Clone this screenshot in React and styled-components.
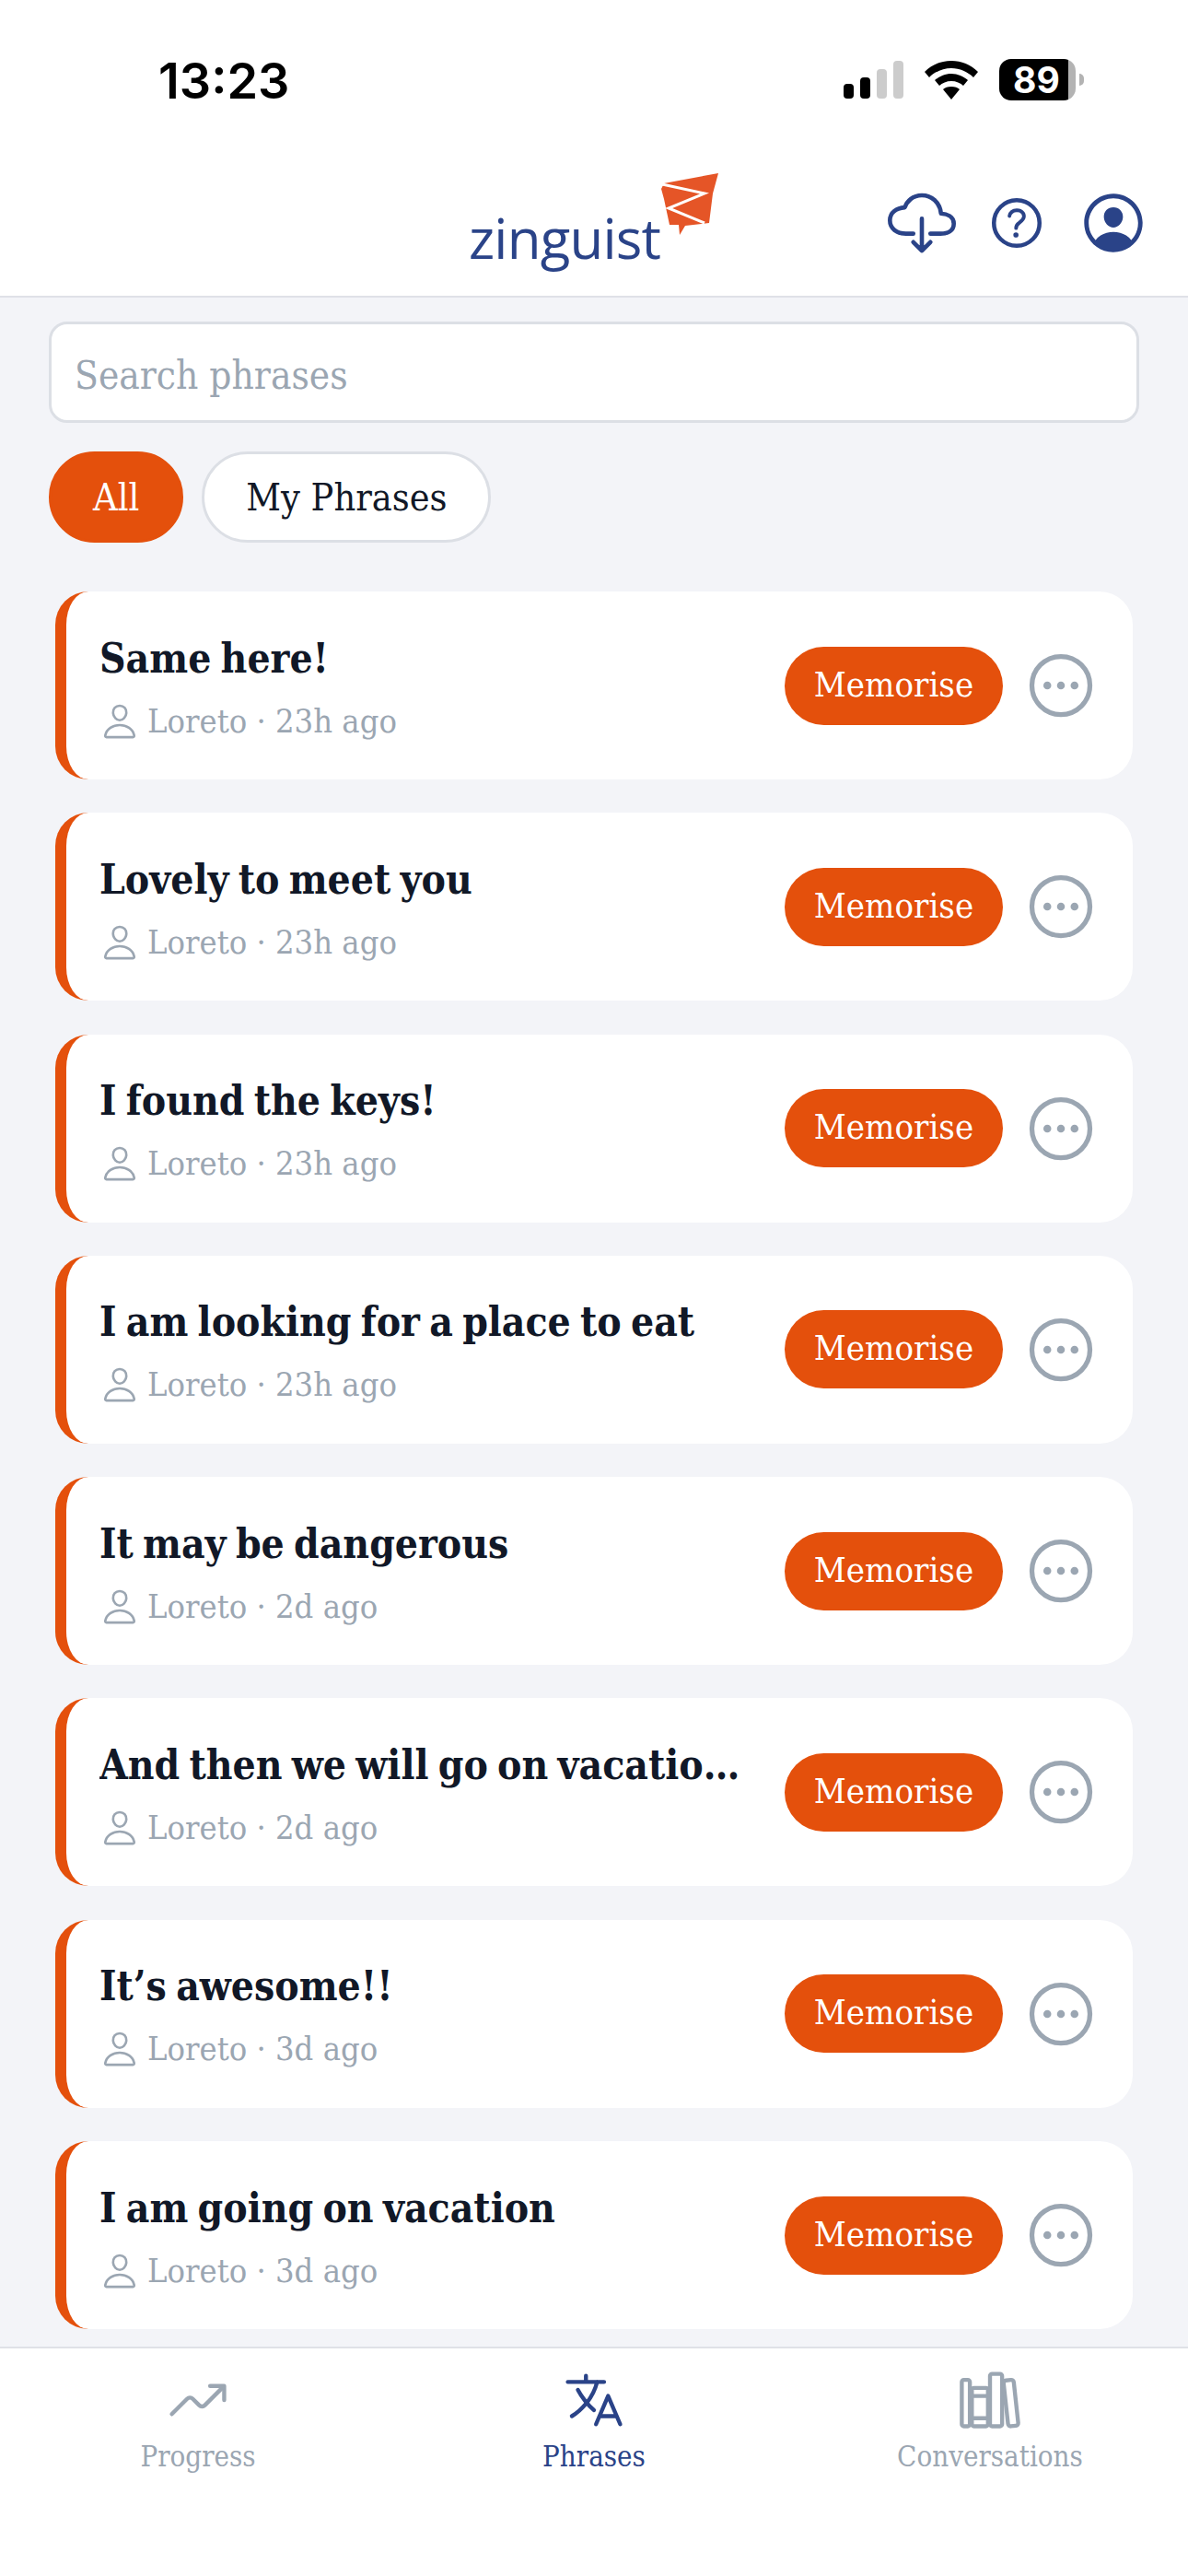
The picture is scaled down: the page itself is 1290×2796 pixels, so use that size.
import React from 'react';
import styled, { createGlobalStyle } from 'styled-components';
import {
  IoCloudDownloadOutline,
  IoHelpCircleOutline,
  IoPersonCircleOutline,
  IoPersonOutline,
  IoEllipsisHorizontalCircleOutline,
  IoTrendingUpOutline,
  IoLanguageOutline,
  IoLibraryOutline,
} from 'react-icons/io5';

const ORANGE = '#e4500c';
const NAVY = '#2a4388';
const GREY = '#9ba6b2';
const SLAB = '"DejaVu Serif Condensed", "DejaVu Serif", serif';

const GlobalStyle = createGlobalStyle`
  html, body { margin: 0; padding: 0; background: #fff; }
  * { box-sizing: border-box; }
`;

const Page = styled.div`
  width: 1290px;
  height: 2796px;
  display: flex;
  flex-direction: column;
  background: #f3f4f8;
  font-family: ${SLAB};
  overflow: hidden;
`;

const TopBar = styled.header`
  height: 323px;
  background: #fff;
  border-bottom: 2px solid #dfe1e7;
  flex-shrink: 0;
`;

const StatusBar = styled.div`
  height: 170px;
  display: flex;
  align-items: flex-start;
  justify-content: space-between;
  padding: 56px 122px 0 172px;
`;

const Time = styled.span`
  font-family: Inter, sans-serif;
  font-weight: 600;
  font-size: 54px;
  line-height: 63px;
  color: #000;
`;

const StatusIcons = styled.div`
  display: flex;
  align-items: center;
  gap: 23px;
  padding-top: 8px;
`;

const Battery = styled.div`
  position: relative;
  width: 83px;
  height: 45px;
  border-radius: 13px;
  display: flex;
  align-items: center;
  padding-left: 15px;
  background: linear-gradient(to right, #000 75px, #b3b3b3 75px);
  color: #fff;
  font-family: Inter, sans-serif;
  font-weight: 700;
  font-size: 39px;
  &::after {
    content: '';
    position: absolute;
    left: 87px;
    top: 16px;
    width: 5px;
    height: 13px;
    border-radius: 0 6px 6px 0;
    background: #b3b3b3;
  }
`;

const BrandRow = styled.div`
  position: relative;
  height: 150px;
  display: flex;
  justify-content: flex-end;
  align-items: center;
  gap: 30px;
  padding: 0 42px 6px 0;
`;

const Logo = styled.div`
  position: absolute;
  left: 509px;
  top: 18px;
  width: 275px;
  height: 120px;
`;

const LogoText = styled.span`
  position: absolute;
  left: 0;
  bottom: 15px;
  font-family: "Open Sans", sans-serif;
  font-weight: 500;
  font-size: 60px;
  line-height: 70px;
  letter-spacing: -0.8px;
  color: ${NAVY};
`;

const LogoKite = styled.svg`
  position: absolute;
  left: 208px;
  top: 0;
`;

const HeaderIcon = styled.span`
  display: flex;
  color: ${NAVY};
  font-size: ${({ $size }) => $size}px;
`;

const Main = styled.main`
  flex: 1;
  min-height: 0;
  display: flex;
  flex-direction: column;
  padding: 26px 53px 0;
`;

const Search = styled.div`
  height: 110px;
  display: flex;
  align-items: center;
  padding: 6px 25px 0;
  background: #fff;
  border: 3px solid #dcdfe5;
  border-radius: 20px;
  color: ${GREY};
  font-size: 42px;
`;

const Chips = styled.div`
  display: flex;
  gap: 20px;
  margin-top: 31px;
`;

const Chip = styled.div`
  height: 99px;
  display: flex;
  align-items: center;
  padding: 0 45px;
  border-radius: 50px;
  border: 3px solid ${({ $active }) => ($active ? ORANGE : '#dcdfe5')};
  background: ${({ $active }) => ($active ? ORANGE : '#fff')};
  color: ${({ $active }) => ($active ? '#fff' : '#111827')};
  font-size: 41px;
`;

const List = styled.div`
  display: flex;
  flex-direction: column;
  gap: 36.3px;
  margin: 53px 7px 0;
`;

const Card = styled.article`
  height: 204px;
  display: flex;
  align-items: center;
  gap: 40px;
  padding: 0 36px 0 37px;
  background: #fff;
  border-left: 12px solid ${ORANGE};
  border-radius: 36px;
`;

const CardBody = styled.div`
  flex: 1;
  min-width: 0;
  padding-top: 4px;
`;

const Title = styled.h3`
  margin: 0 0 0 -1px;
  font-size: 44px;
  line-height: 56px;
  font-weight: 700;
  word-spacing: -3.5px;
  color: #111827;
  white-space: nowrap;
  overflow: hidden;
  text-overflow: ellipsis;
`;

const Meta = styled.div`
  display: flex;
  align-items: center;
  gap: 9px;
  margin-top: 17px;
  color: ${GREY};
  font-size: 36px;
  line-height: 46px;
`;

const Actions = styled.div`
  display: flex;
  align-items: center;
  gap: 21px;
  flex-shrink: 0;
`;

const MemoriseButton = styled.button`
  width: 237px;
  height: 85px;
  padding: 0 0 3px;
  border: none;
  border-radius: 43px;
  background: ${ORANGE};
  color: #fff;
  font-family: inherit;
  font-size: 38px;
`;

const MoreIcon = styled.span`
  display: flex;
  color: ${GREY};
  font-size: 84px;
`;

const BottomNav = styled.nav`
  height: 249px;
  flex-shrink: 0;
  display: grid;
  grid-template-columns: repeat(3, 430px);
  background: #fff;
  border-top: 2px solid #dfe1e7;
`;

const NavItem = styled.div`
  display: flex;
  flex-direction: column;
  align-items: center;
  padding-top: 21px;
  color: ${({ $active }) => ($active ? NAVY : GREY)};
  font-size: 31px;
  line-height: 40px;
`;

const NavIcon = styled.span`
  display: flex;
  height: 70px;
  align-items: center;
  font-size: 70px;
  margin-bottom: 6px;
`;

const phrases = [
  ['Same here!', '23h ago'],
  ['Lovely to meet you', '23h ago'],
  ['I found the keys!', '23h ago'],
  ['I am looking for a place to eat', '23h ago'],
  ['It may be dangerous', '2d ago'],
  ['And then we will go on vacation soon', '2d ago'],
  ['It’s awesome!!', '3d ago'],
  ['I am going on vacation', '3d ago'],
];

const App = () => (
  <Page>
    <GlobalStyle />
    <TopBar>
      <StatusBar>
        <Time>13:23</Time>
        <StatusIcons>
          <svg width="65" height="41" viewBox="0 0 65 41">
            <rect x="0" y="25" width="11" height="16" rx="4" fill="#000" />
            <rect x="18" y="18" width="11" height="23" rx="4" fill="#000" />
            <rect x="36" y="9" width="11" height="32" rx="4" fill="#ccc" />
            <rect x="54" y="0" width="11" height="41" rx="4" fill="#ccc" />
          </svg>
          <svg width="58" height="42" viewBox="0 0 58 42">
            <path d="M29 0C18 0 8 4 0 12l5 6c6-6 15-10 24-10s18 4 24 10l5-6C50 4 40 0 29 0z" fill="#000" />
            <path d="M29 14c-7 0-13 3-18 7l5 6c3-3 8-5 13-5s10 2 13 5l5-6c-5-4-11-7-18-7z" fill="#000" />
            <path d="M29 28c-4 0-7 1-9 3l9 11 9-11c-2-2-5-3-9-3z" fill="#000" />
          </svg>
          <Battery>89</Battery>
        </StatusIcons>
      </StatusBar>
      <BrandRow>
        <Logo>
          <LogoText>zinguist</LogoText>
          <LogoKite width="66" height="76" viewBox="0 0 66 76">
            <path d="M4 11L63 0 57 22 53 54 27 57 21 67 20 56 10 56 4 28 1 17z" fill="#e55527" />
            <path d="M2 12L48 22 9 38 48 54" fill="none" stroke="#fff" strokeWidth="3" />
          </LogoKite>
        </Logo>
        <HeaderIcon $size={74}><IoCloudDownloadOutline /></HeaderIcon>
        <HeaderIcon $size={72}><IoHelpCircleOutline /></HeaderIcon>
        <HeaderIcon $size={78}><IoPersonCircleOutline /></HeaderIcon>
      </BrandRow>
    </TopBar>

    <Main>
      <Search>Search phrases</Search>
      <Chips>
        <Chip $active>All</Chip>
        <Chip>My Phrases</Chip>
      </Chips>
      <List>
        {phrases.map(([text, age]) => (
          <Card key={text}>
            <CardBody>
              <Title>{text}</Title>
              <Meta>
                <IoPersonOutline size={42} />
                <span>Loreto · {age}</span>
              </Meta>
            </CardBody>
            <Actions>
              <MemoriseButton>Memorise</MemoriseButton>
              <MoreIcon><IoEllipsisHorizontalCircleOutline /></MoreIcon>
            </Actions>
          </Card>
        ))}
      </List>
    </Main>

    <BottomNav>
      <NavItem>
        <NavIcon><IoTrendingUpOutline /></NavIcon>
        Progress
      </NavItem>
      <NavItem $active>
        <NavIcon><IoLanguageOutline /></NavIcon>
        Phrases
      </NavItem>
      <NavItem>
        <NavIcon><IoLibraryOutline /></NavIcon>
        Conversations
      </NavItem>
    </BottomNav>
  </Page>
);

export default App;
